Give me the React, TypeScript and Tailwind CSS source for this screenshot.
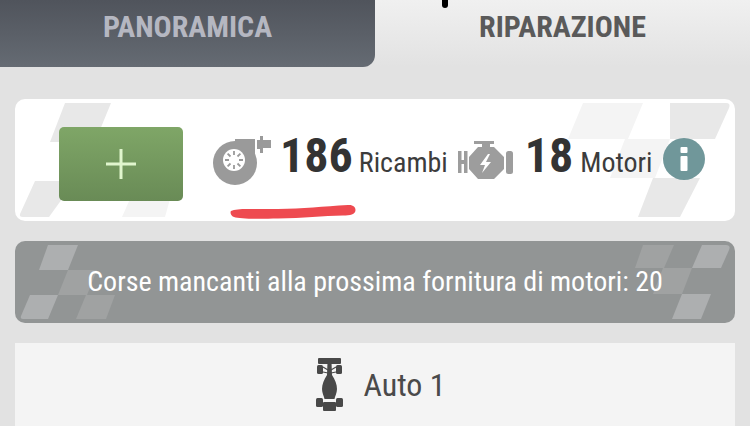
export default function App() {
  return (
    <div className="relative h-[426px] w-[750px] overflow-hidden bg-[#e2e2e2] font-['Roboto',sans-serif]">
      <div className="flex h-[67px]">
        <div className="flex w-[375px] items-center justify-center rounded-br-[12px] bg-gradient-to-b from-[#50545c] to-[#656b73] pb-[15px] text-[30px] font-bold text-[#b5b7c1] [font-stretch:75%]">
          PANORAMICA
        </div>
        <div className="flex flex-1 items-center justify-center bg-gradient-to-b from-[#f0f0f0] to-[#e2e2e2] pb-[15px] text-[30px] font-bold text-[#5a5a5a] [font-stretch:75%]">
          RIPARAZIONE
        </div>
      </div>
      <div className="absolute left-[442px] top-0 h-[8px] w-[6px] rounded-b-full bg-black" />

      <div className="px-[15px] pt-[32px]">
        <div className="relative h-[122px] overflow-hidden rounded-[10px] bg-white">
          <CardFlag />
          <div className="relative flex h-full items-center pl-[44px]">
            <button className="mt-[8px] flex h-[74px] w-[124px] items-center justify-center rounded-[5px] bg-gradient-to-b from-[#7fa667] to-[#698b56]">
              <svg width="32" height="32" viewBox="0 0 32 32">
                <path d="M14.500 1h3v13.500H31v3H17.500V31h-3V17.500H1v-3h13.500z" fill="#e0f5cd" />
              </svg>
            </button>
            <TurboIcon />
            <span className="mb-[8px] ml-[9px] text-[48px] font-bold leading-none text-[#333] [font-stretch:75%]">186</span>
            <span className="ml-[6px] mt-[6px] text-[28px] text-[#3c3c3c] [font-stretch:75%]">Ricambi</span>
            <EngineIcon />
            <span className="mb-[8px] ml-[12px] text-[48px] font-bold leading-none text-[#333] [font-stretch:75%]">18</span>
            <span className="ml-[7px] mt-[6px] text-[28px] text-[#3c3c3c] [font-stretch:75%]">Motori</span>
            <div className="ml-[11px] mt-[-2px] flex h-[42px] w-[42px] items-center justify-center rounded-full bg-[#70979a]">
              <svg width="8" height="24" viewBox="0 0 8 24">
                <rect x="0.500" y="0" width="7" height="6" rx="1" fill="#fff" />
                <rect x="0.500" y="9" width="7" height="15" rx="1" fill="#fff" />
              </svg>
            </div>
          </div>
        </div>

        <div className="relative mt-[20px] flex h-[82px] items-center justify-center overflow-hidden rounded-[10px] bg-[#929595]">
          <BannerFlag />
          <span className="relative text-[28px] text-white [font-stretch:75%]">
            Corse mancanti alla prossima fornitura di motori: 20
          </span>
        </div>

        <div className="mt-[20px] flex h-[83px] items-center justify-center gap-[20px] bg-[#f4f4f4] pl-[12px]">
          <CarIcon />
          <span className="text-[32px] text-[#4a4a4a] [font-stretch:75%]">Auto 1</span>
        </div>
      </div>

      {/* red marker line drawn on top of the screenshot */}
      <svg className="absolute left-[228px] top-[203px]" width="130" height="17" viewBox="0 0 130 17">
        <path
          d="M3 8C10 4.500 25 6.500 50 6C75 5.500 95 3.500 120 2C125 1.500 127.500 4 127.500 7C127.500 11.500 122 12.500 115 12.500C95 13 75 15 50 15.500C30 16 12 16 6 14C2.500 12.500 2 9 3 8Z"
          fill="#ee4a50"
        />
      </svg>
    </div>
  );
}

function CardFlag() {
  return (
    <svg className="absolute inset-0" width="720" height="122" viewBox="0 0 720 122">
      <g fill="#e8e8e8">
        <path d="M50 4H96L80 43H35Z" />
        <path d="M20 82H60L34 118H8Q4 118 5 115Z" />
        <path d="M655 4H711Q716 4 714 9L700 40H655Z" />
        <path d="M638 79H685L665 118H623Z" />
      </g>
      <g fill="#f4f4f4">
        <path d="M80 43H125L109 80H65Z" />
        <path d="M123 82H160L150 118H107Z" />
        <path d="M568 4H628L613 40H553Z" />
        <path d="M610 40H655L640 79H595Z" />
      </g>
    </svg>
  );
}

function BannerFlag() {
  return (
    <svg className="absolute inset-0" width="720" height="82" viewBox="0 0 720 82">
      <g fill="#a0a2a2">
        <path d="M53 29H82L72 54H43Z" />
        <path d="M71 54H100L91 78H61Z" />
        <path d="M628 4H659L649 27H620Z" />
        <path d="M648 27H677L667 53H638Z" />
      </g>
      <g fill="#adafb0">
        <path d="M33 4H63L53 29H24Z" />
        <path d="M15 54H43L33 78H8Q5 78 6 75Z" />
        <path d="M687 4H711Q716 4 714 9L706 27H677Z" />
        <path d="M667 53H696L686 78H657Z" />
      </g>
    </svg>
  );
}

function TurboIcon() {
  return (
    <svg className="ml-[30px] shrink-0" width="58" height="50" viewBox="0 0 58 50" fill="#9a9a9a">
      <circle cx="22" cy="28" r="22" />
      <rect x="22" y="4" width="20" height="16" />
      <path d="M44 5H47V1H50V5H58V13H50V18H47V14H44Z" />
      <circle cx="21" cy="25" r="11" fill="#fff" />
      <g stroke="#9a9a9a" strokeWidth="1.800">
        <path d="M21 16V20" />
        <path d="M21 30V34" />
        <path d="M12 25H16" />
        <path d="M26 25H30" />
        <path d="M14.600 18.600L17.500 21.500" />
        <path d="M24.500 28.500L27.400 31.400" />
        <path d="M27.400 18.600L24.500 21.500" />
        <path d="M17.500 28.500L14.600 31.400" />
      </g>
    </svg>
  );
}

function EngineIcon() {
  return (
    <svg className="ml-[9px] shrink-0" width="56" height="40" viewBox="0 0 56 40" fill="#9d9d9d">
      <path d="M1 11H4.500V20H7V11H10.500V33H7V24H4.500V33H1Z" />
      <path d="M17 1H37V4H33V7H37L47 17V29L37 39H21L12 29V17L21 7H25V4H17Z" />
      <rect x="49" y="11" width="7" height="23" rx="2.500" />
      <path d="M31 14L23 25H28L25 33L34 22H29L33 14Z" fill="#fff" />
    </svg>
  );
}

function CarIcon() {
  return (
    <svg className="shrink-0" width="27" height="53" viewBox="0 0 27 53" fill="#484848">
      <rect x="2" y="0" width="23" height="6" rx="1" />
      <rect x="1" y="7" width="6" height="9" rx="1.500" />
      <rect x="20" y="7" width="6" height="9" rx="1.500" />
      <path d="M7 9L12 12M20 9L15 12M7 14L12 15M20 14L15 15" stroke="#484848" strokeWidth="1.200" />
      <path d="M11.500 4H15.500L16 17C19 22 21 26 21 31C21 35 19 38 18.500 41H8.500C8 38 6 35 6 31C6 26 8 22 11 17Z" />
      <rect x="0" y="40" width="7" height="9" rx="1.500" />
      <rect x="20" y="40" width="7" height="9" rx="1.500" />
      <rect x="7" y="44" width="13" height="9" rx="1" />
      <path d="M10 43H11.500M13 43H14.500M16 43H17.500" stroke="#f4f4f4" strokeWidth="1" />
    </svg>
  );
}
